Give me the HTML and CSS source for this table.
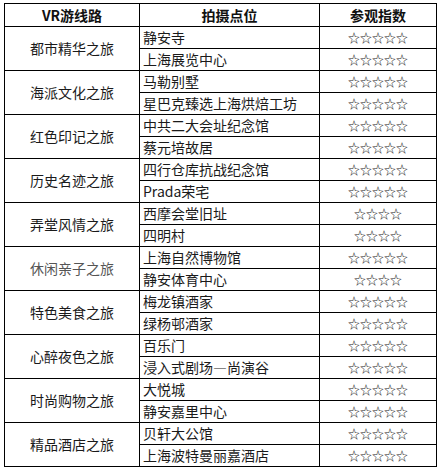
FILE: index.html
```html
<!DOCTYPE html>
<html lang="zh">
<head>
<meta charset="utf-8">
<link rel="stylesheet" href="styles.css">
</head>
<body>
<table class="routes">
  <colgroup>
    <col class="c1"><col class="c2"><col class="c3">
  </colgroup>
  <thead>
    <tr><th>VR游线路</th><th>拍摄点位</th><th>参观指数</th></tr>
  </thead>
  <tbody>
    <tr><td class="route" rowspan="2">都市精华之旅</td><td class="spot">静安寺</td><td class="stars">☆☆☆☆☆</td></tr>
    <tr><td class="spot">上海展览中心</td><td class="stars">☆☆☆☆☆</td></tr>
    <tr><td class="route" rowspan="2">海派文化之旅</td><td class="spot">马勒别墅</td><td class="stars">☆☆☆☆☆</td></tr>
    <tr><td class="spot">星巴克臻选上海烘焙工坊</td><td class="stars">☆☆☆☆☆</td></tr>
    <tr><td class="route" rowspan="2">红色印记之旅</td><td class="spot">中共二大会址纪念馆</td><td class="stars">☆☆☆☆☆</td></tr>
    <tr><td class="spot">蔡元培故居</td><td class="stars">☆☆☆☆☆</td></tr>
    <tr><td class="route" rowspan="2">历史名迹之旅</td><td class="spot">四行仓库抗战纪念馆</td><td class="stars">☆☆☆☆☆</td></tr>
    <tr><td class="spot">Prada荣宅</td><td class="stars">☆☆☆☆☆</td></tr>
    <tr><td class="route" rowspan="2">弄堂风情之旅</td><td class="spot">西摩会堂旧址</td><td class="stars">☆☆☆☆</td></tr>
    <tr><td class="spot">四明村</td><td class="stars">☆☆☆☆</td></tr>
    <tr><td class="route muted" rowspan="2">休闲亲子之旅</td><td class="spot">上海自然博物馆</td><td class="stars">☆☆☆☆☆</td></tr>
    <tr><td class="spot">静安体育中心</td><td class="stars">☆☆☆☆</td></tr>
    <tr><td class="route" rowspan="2">特色美食之旅</td><td class="spot">梅龙镇酒家</td><td class="stars">☆☆☆☆☆</td></tr>
    <tr><td class="spot">绿杨邨酒家</td><td class="stars">☆☆☆☆☆</td></tr>
    <tr><td class="route" rowspan="2">心醉夜色之旅</td><td class="spot">百乐门</td><td class="stars">☆☆☆☆☆</td></tr>
    <tr><td class="spot">浸入式剧场—尚演谷</td><td class="stars">☆☆☆☆☆</td></tr>
    <tr><td class="route" rowspan="2">时尚购物之旅</td><td class="spot">大悦城</td><td class="stars">☆☆☆☆☆</td></tr>
    <tr><td class="spot">静安嘉里中心</td><td class="stars">☆☆☆☆☆</td></tr>
    <tr><td class="route" rowspan="2">精品酒店之旅</td><td class="spot">贝轩大公馆</td><td class="stars">☆☆☆☆☆</td></tr>
    <tr><td class="spot">上海波特曼丽嘉酒店</td><td class="stars">☆☆☆☆☆</td></tr>
  </tbody>
</table>
</body>
</html>
```
FILE: styles.css
```css
html, body {
  margin: 0;
  padding: 0;
  background: #fff;
}
body {
  padding: 3px 0 0 4px;
  font-family: "Noto Sans CJK SC", "Noto Sans", sans-serif;
  color: #1a1a1a;
}
.routes {
  border-collapse: collapse;
  table-layout: fixed;
  width: 432px;
  border: 1px solid #000;
}
.c1 { width: 135px; }
.c2 { width: 180px; }
.c3 { width: 117px; }
.routes th,
.routes td {
  border: 1px solid #000;
  padding: 0;
  font-size: 14px;
  white-space: nowrap;
  overflow: hidden;
}
.routes th {
  height: 22px;
  line-height: 22px;
  font-weight: bold;
  text-align: center;
  color: #111;
}
.routes td {
  height: 21px;
  line-height: 21px;
}
.route {
  text-align: center;
}
.route.muted {
  color: #555;
}
.routes td.spot {
  padding-left: 3px;
  text-align: left;
}
.routes td.stars {
  text-align: center;
  font-size: 12px;
  color: #222;
}
```
